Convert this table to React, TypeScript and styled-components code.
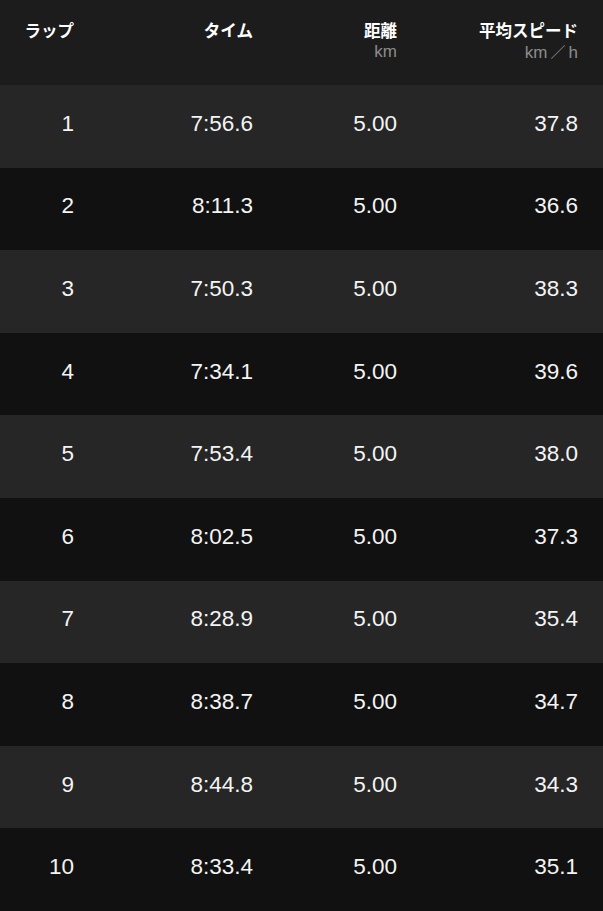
import React from "react";
import styled, { createGlobalStyle } from "styled-components";

const Global = createGlobalStyle`
  html, body { margin: 0; padding: 0; background: #111111; }
  body { font-family: "Liberation Sans", "Noto Sans CJK JP", sans-serif; }
`;

const Table = styled.div`
  width: 603px;
  height: 911px;
  overflow: hidden;
  display: flex;
  flex-direction: column;
`;

const Grid = styled.div`
  display: grid;
  grid-template-columns: 74px 179px 144px 181px;
  padding-right: 25px;
`;

const HeaderRow = styled(Grid)`
  height: 85px;
  background: #1c1c1c;
  align-items: start;
  padding-top: 19px;
  box-sizing: border-box;
`;

const HeadCell = styled.div`
  display: flex;
  flex-direction: column;
  align-items: flex-end;
`;

const HeadTitle = styled.div`
  font-family: "Noto Sans CJK JP", sans-serif;
  font-weight: 700;
  font-size: 16.5px;
  line-height: 22px;
  color: #ffffff;
  white-space: nowrap;
`;

const HeadUnit = styled.div`
  font-family: "Liberation Sans", "Noto Sans CJK JP", sans-serif;
  font-size: 17px;
  line-height: 20px;
  margin-top: 1px;
  color: #8c8c8c;
  white-space: nowrap;
`;

const Slash = styled.span`
  font-family: "Noto Sans CJK JP", sans-serif;
  font-size: 15px;
  margin: 0 3px;
`;

const Row = styled(Grid)<{ $odd: boolean }>`
  flex: 1;
  align-items: center;
  background: ${(p) => (p.$odd ? "#262626" : "#111111")};
`;

const Cell = styled.div`
  text-align: right;
  font-size: 22.5px;
  color: #f4f4f4;
  padding-bottom: 5px;
  white-space: nowrap;
`;

const laps = [
  ["1", "7:56.6", "5.00", "37.8"],
  ["2", "8:11.3", "5.00", "36.6"],
  ["3", "7:50.3", "5.00", "38.3"],
  ["4", "7:34.1", "5.00", "39.6"],
  ["5", "7:53.4", "5.00", "38.0"],
  ["6", "8:02.5", "5.00", "37.3"],
  ["7", "8:28.9", "5.00", "35.4"],
  ["8", "8:38.7", "5.00", "34.7"],
  ["9", "8:44.8", "5.00", "34.3"],
  ["10", "8:33.4", "5.00", "35.1"],
];

export default function App() {
  return (
    <>
      <Global />
      <Table>
        <HeaderRow>
          <HeadCell>
            <HeadTitle>ラップ</HeadTitle>
          </HeadCell>
          <HeadCell>
            <HeadTitle>タイム</HeadTitle>
          </HeadCell>
          <HeadCell>
            <HeadTitle>距離</HeadTitle>
            <HeadUnit>km</HeadUnit>
          </HeadCell>
          <HeadCell>
            <HeadTitle>平均スピード</HeadTitle>
            <HeadUnit>
              km<Slash>／</Slash>h
            </HeadUnit>
          </HeadCell>
        </HeaderRow>
        {laps.map((r, i) => (
          <Row key={r[0]} $odd={i % 2 === 0}>
            {r.map((v, j) => (
              <Cell key={j}>{v}</Cell>
            ))}
          </Row>
        ))}
      </Table>
    </>
  );
}
